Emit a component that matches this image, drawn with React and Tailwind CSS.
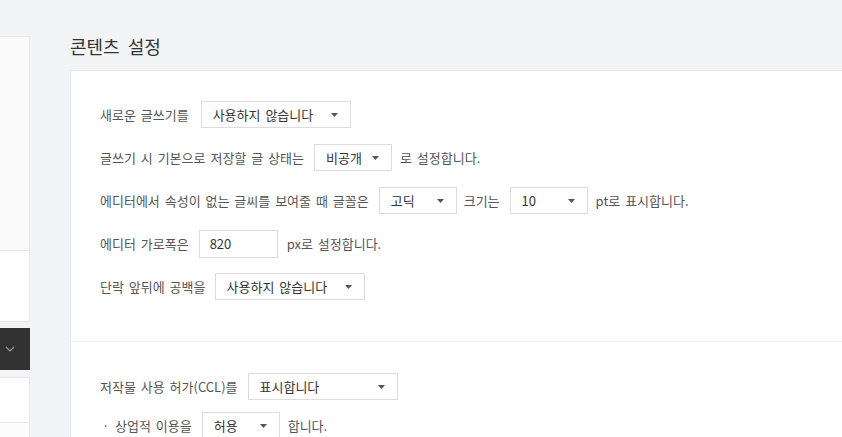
import React from "react";

const font = { fontFamily: '"Noto Sans CJK KR", "Noto Sans", sans-serif' };

function Arrow() {
  return (
    <svg width="7" height="4" viewBox="0 0 7 4" className="shrink-0">
      <path d="M0 0h7L3.5 4z" fill="#555" />
    </svg>
  );
}

function Select({ w, children }) {
  return (
    <div
      className={`${w} h-[27px] border border-[#dcdcdc] bg-white flex items-center justify-between pl-[11px] pr-[12px] text-[13px] text-[#333]`}
    >
      <span>{children}</span>
      <Arrow />
    </div>
  );
}

function Row({ children, className = "" }) {
  return (
    <div className={`flex items-center h-[27px] text-[13px] text-[#555] [word-spacing:2px] ${className}`}>
      {children}
    </div>
  );
}

export default function App() {
  return (
    <div className="w-[842px] h-[437px] overflow-hidden bg-[#f3f4f6]" style={font}>
      <div className="flex w-[1000px]">
        {/* sidebar */}
        <div className="w-[30px] shrink-0 pt-[36px] flex flex-col">
          <div className="h-[215px] bg-[#fafafa] border-t border-r border-b border-[#e6e8ec]" />
          <div className="h-[71px] bg-white border-r border-b border-[#e6e8ec]" />
          <div className="h-[42px] mt-[6px] bg-[#323232] flex items-center pl-[5px]">
            <svg width="10" height="6" viewBox="0 0 10 6">
              <path d="M1 1l4 4 4-4" fill="none" stroke="#9a9a9a" strokeWidth="1.2" />
            </svg>
          </div>
          <div className="h-[46px] mt-[7px] bg-white border-t border-r border-b border-[#e6e8ec]" />
          <div className="h-[20px] bg-[#fcfcfc] border-r border-[#e6e8ec]" />
        </div>

        {/* main */}
        <div className="ml-[40px] flex-1 flex flex-col">
          <div className="h-[70px] pt-[35px]">
            <h1 className="text-[18px] leading-[22px] text-[#333] [word-spacing:4px]">콘텐츠 설정</h1>
          </div>
          <div className="bg-white border-t border-l border-[#e6e8ec]">
            <div className="pl-[29px] pt-[30px] pb-[41px] flex flex-col gap-[16px]">
              <Row>
                <span>새로운 글쓰기를</span>
                <div className="ml-[12px]">
                  <Select w="w-[150px]">사용하지 않습니다</Select>
                </div>
              </Row>
              <Row>
                <span>글쓰기 시 기본으로 저장할 글 상태는</span>
                <div className="ml-[10px]">
                  <Select w="w-[78px]">비공개</Select>
                </div>
                <span className="ml-[8px]">로 설정합니다.</span>
              </Row>
              <Row>
                <span>에디터에서 속성이 없는 글씨를 보여줄 때 글꼴은</span>
                <div className="ml-[10px]">
                  <Select w="w-[78px]">고딕</Select>
                </div>
                <span className="ml-[7px]">크기는</span>
                <div className="ml-[10px]">
                  <Select w="w-[78px]">10</Select>
                </div>
                <span className="ml-[8px]">pt로 표시합니다.</span>
              </Row>
              <Row>
                <span>에디터 가로폭은</span>
                <div className="ml-[10px] w-[79px] h-[28px] border border-[#dcdcdc] flex items-center pl-[10px] text-[13px] text-[#333]">
                  820
                </div>
                <span className="ml-[9px]">px로 설정합니다.</span>
              </Row>
              <Row>
                <span>단락 앞뒤에 공백을</span>
                <div className="ml-[9px]">
                  <Select w="w-[150px]">사용하지 않습니다</Select>
                </div>
              </Row>
            </div>
            <div className="border-t border-[#f2f2f2] pl-[29px] pt-[31px] flex flex-col gap-[12px]">
              <Row>
                <span>저작물 사용 허가(CCL)를</span>
                <div className="ml-[10px]">
                  <Select w="w-[150px]">표시합니다</Select>
                </div>
              </Row>
              <Row>
                <span className="w-[15px] pl-[2px] text-[#555]">·</span>
                <span>상업적 이용을</span>
                <div className="ml-[10px]">
                  <Select w="w-[78px]">허용</Select>
                </div>
                <span className="ml-[8px]">합니다.</span>
              </Row>
            </div>
          </div>
        </div>
      </div>
    </div>
  );
}
